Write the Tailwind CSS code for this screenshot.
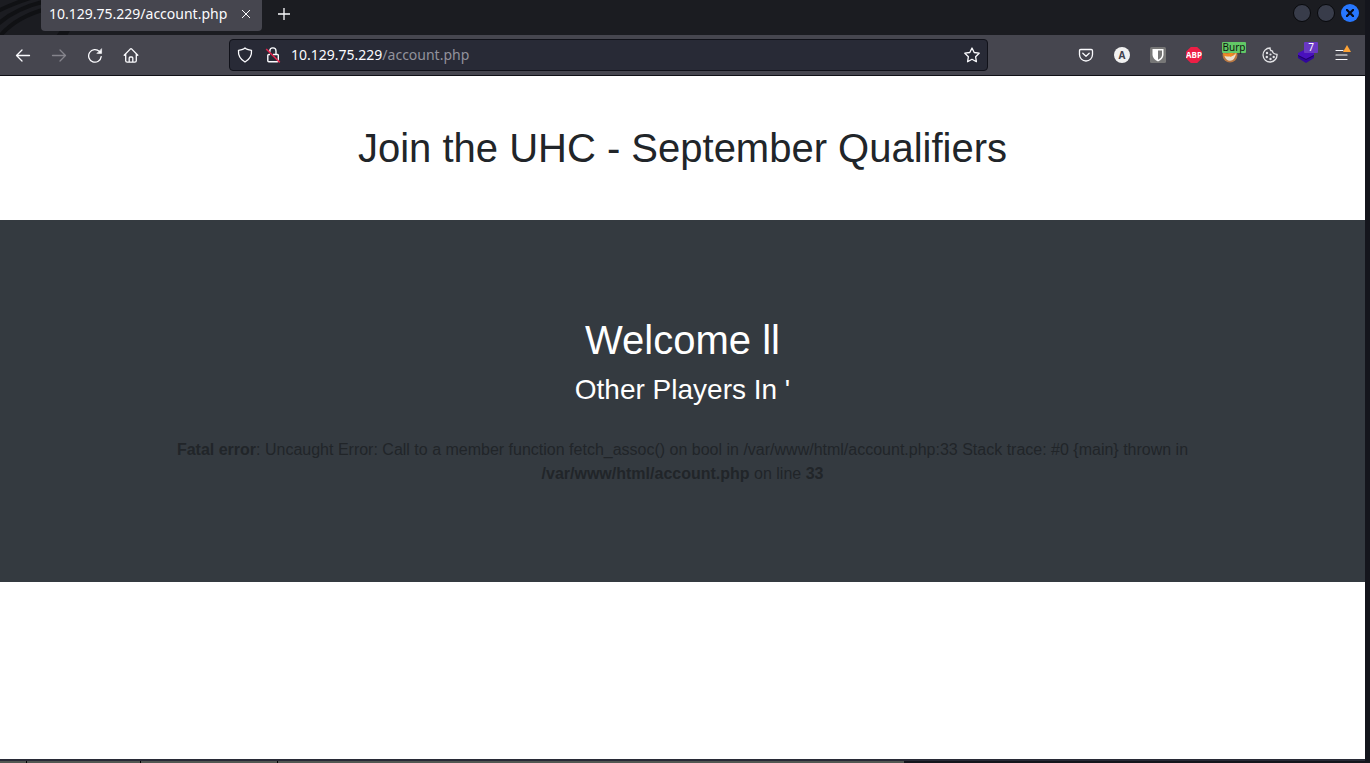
<!DOCTYPE html>
<html lang="en">
<head>
<meta charset="utf-8">
<title>10.129.75.229/account.php</title>
<script src="https://cdn.jsdelivr.net/npm/@tailwindcss/browser@4"></script>
</head>
<body class="h-screen overflow-hidden bg-[#14151c] pr-[5px] font-['Noto_Sans',sans-serif]">
<div class="flex h-full flex-col">
  <header class="relative flex h-[35px] shrink-0 items-start bg-[#1b1c21] pl-[41px] text-[#fbfbfe]">
    <svg class="absolute left-0 top-0" width="72" height="35" viewBox="0 0 72 35" fill="none" stroke="#101114" stroke-width="4" aria-hidden="true"><path d="M-2 11Q16 2 40-5M-2 24Q16 8 46 1M0 36Q16 17 46 9"/><path d="M56 36L61 29H71L67 36Z" fill="#111216" stroke="none"/></svg>
    <div class="relative flex h-[31px] w-[221px] items-center justify-between rounded-b bg-[#46464f] pl-2 pr-2 pb-[3px]">
      <span class="text-sm whitespace-nowrap">10.129.75.229/account.php</span>
      <button aria-label="Close tab" class="grid size-4 place-items-center"><svg width="10" height="10" viewBox="0 0 10 10" stroke="currentColor" stroke-width="1"><path d="M1 1L9 9M9 1L1 9"/></svg></button>
    </div>
    <button aria-label="New tab" class="ml-[14px] grid h-[28px] w-4 place-items-center"><svg width="14" height="14" viewBox="0 0 14 14" stroke="currentColor" stroke-width="1.3"><path d="M7 1V13M1 7H13"/></svg></button>
    <div class="ml-auto flex h-[26px] items-center gap-[6px] pr-[6px]">
      <button aria-label="Minimize" class="size-[18px] rounded-full border border-[#08090c] bg-[#383c4a]"></button>
      <button aria-label="Maximize" class="size-[18px] rounded-full border border-[#08090c] bg-[#383c4a]"></button>
      <button aria-label="Close window" class="grid size-[18px] place-items-center rounded-full bg-[#2777ff]"><svg width="8" height="8" viewBox="0 0 8 8" stroke="#080b18" stroke-width="2.2"><path d="M0 0L8 8M8 0L0 8"/></svg></button>
    </div>
  </header>

  <nav aria-label="Browser toolbar" class="flex h-[41px] shrink-0 items-center border-b border-[#0f1016] bg-[#46464f] pl-[15px] pr-[15px] text-[#fbfbfe]">
    <div class="flex w-[214px] shrink-0 items-center gap-5">
      <button aria-label="Back"><svg width="16" height="16" viewBox="0 0 16 16" fill="none" stroke="currentColor" stroke-width="1.3" stroke-linecap="round" stroke-linejoin="round"><path d="M14.5 8.5H1.5M7 3L1.5 8.5L7 14"/></svg></button>
      <button aria-label="Forward" disabled class="text-[#85848c]"><svg width="16" height="16" viewBox="0 0 16 16" fill="none" stroke="currentColor" stroke-width="1.3" stroke-linecap="round" stroke-linejoin="round"><path d="M1.5 8.5H14.5M9 3L14.5 8.5L9 14"/></svg></button>
      <button aria-label="Reload"><svg width="16" height="16" viewBox="0 0 16 16" fill="none" stroke="currentColor" stroke-width="1.3" stroke-linecap="round"><path d="M12.4 4.4A6.3 6.3 0 1 0 14.2 9.6"/><path d="M14.6 2V6.4H10.2Z" fill="currentColor" stroke-width=".6" stroke-linejoin="round"/></svg></button>
      <button aria-label="Home"><svg width="16" height="16" viewBox="0 0 16 16" fill="none" stroke="currentColor" stroke-width="1.3" stroke-linecap="round" stroke-linejoin="round"><path d="M1.2 8.3L7.2 2.1Q8 1.4 8.8 2.1L14.8 8.3M2.7 7.1V13.8Q2.7 15.2 4.2 15.2H11.8Q13.3 15.2 13.3 13.8V7.1M6.2 15V11Q6.2 10 7.2 10H8.8Q9.8 10 9.8 11V15"/></svg></button>
    </div>
    <div class="flex h-8 flex-1 items-center rounded border border-[#101119] bg-[#282a36] px-[7px]">
      <button aria-label="Tracking protection"><svg width="16" height="16" viewBox="0 0 16 16" fill="none" stroke="currentColor" stroke-width="1.3" stroke-linejoin="round"><path d="M8 1Q9.5 2.6 14.5 3.3Q15.2 11 8 15Q.8 11 1.5 3.3Q6.5 2.6 8 1Z"/></svg></button>
      <button aria-label="Connection not secure" class="ml-3"><svg width="16" height="16" viewBox="0 0 16 16" fill="none" stroke="currentColor" stroke-width="1.4"><path d="M4.8 5V4A3.1 3.1 0 0 1 11 4V7.5M8 7.5H12.5Q13.3 7.5 13.3 8.3V13.5Q13.3 14.7 12.3 14.7H3.8Q2.8 14.7 2.8 13.7V8.5Q2.8 7.5 3.8 7.5H5"/><path d="M1.2 2L14.8 15.4" stroke="#e22850" stroke-width="1.5"/></svg></button>
      <div class="relative ml-[10px] h-6 flex-1 text-sm leading-6">
        <input aria-label="Address" type="text" value="10.129.75.229/account.php" class="absolute inset-0 w-full bg-transparent text-transparent outline-none">
        <div aria-hidden="true" class="pointer-events-none relative whitespace-nowrap">10.129.75.229<span class="text-[#92929c]">/account.php</span></div>
      </div>
      <button aria-label="Bookmark this page"><svg width="16" height="16" viewBox="0 0 16 16" fill="none" stroke="currentColor" stroke-width="1.3" stroke-linejoin="round"><path d="M8 1L10.2 5.5L15.2 6.2L11.6 9.7L12.4 14.7L8 12.3L3.6 14.7L4.4 9.7L.8 6.2L5.8 5.5Z"/></svg></button>
    </div>
    <div class="ml-[90px] flex shrink-0 items-center gap-5">
      <button aria-label="Save to Pocket"><svg width="16" height="16" viewBox="0 0 16 16" fill="none" stroke="currentColor" stroke-width="1.3" stroke-linecap="round" stroke-linejoin="round"><path d="M2.8 2.5H13.2Q14.5 2.5 14.5 3.8V7.5A6.5 6.5 0 0 1 1.5 7.5V3.8Q1.5 2.5 2.8 2.5Z"/><path d="M4.8 6.3L8 9.3L11.2 6.3"/></svg></button>
      <button aria-label="Account" class="grid size-4 place-items-center rounded-full bg-[#f1f1f1] text-[10px] leading-none font-bold text-[#42414d]">A</button>
      <button aria-label="Password manager"><svg width="16" height="16" viewBox="0 0 16 16"><rect width="16" height="16" rx="1.5" fill="#777"/><path d="M2.5 2H13.5V8Q13 12 8 14.5Q3 12 2.5 8Z" fill="#fff"/><path d="M8 3.5H12V8Q11.6 11 8 12.8Z" fill="#777"/></svg></button>
      <button aria-label="Adblock Plus"><svg width="16" height="16" viewBox="0 0 16 16"><path d="M4.8 0H11.2L16 4.8V11.2L11.2 16H4.8L0 11.2V4.8Z" fill="#ed1e45"/><text x="8" y="11" fill="#fff" text-anchor="middle" font-family="Open Sans" font-size="8" font-weight="700">ABP</text></svg></button>
      <button aria-label="FoxyProxy, Burp" class="relative w-5"><svg width="16" height="16" viewBox="0 0 16 16"><circle cx="8" cy="8" r="7.5" fill="#b77743"/><path d="M1 6Q2 12 8 13Q14 12 15 5L10 8Z" fill="#ef8a25"/><path d="M2.5 9Q4 13.5 8 13.8Q13 13.5 14 6Q11 11 2.5 9Z" fill="#e8ded0"/><path d="M5 7L12 5L9 10Z" fill="#f08a22"/></svg><span class="absolute -top-[5px] left-0 h-[11px] w-6 rounded-[1px] bg-[#62c866] text-center text-[10px] leading-[11px] text-[#101510]">Burp</span></button>
      <button aria-label="Cookie editor"><svg width="16" height="16" viewBox="0 0 16 16" fill="none" stroke="#e3e3e6" stroke-width="1.3"><path d="M8 1Q8 4 10.5 4.2Q10.8 7 15 7.3A7 7 0 1 1 8 1Z"/><g fill="#e3e3e6" stroke="none"><circle cx="5" cy="6" r="1.2"/><circle cx="8.5" cy="7.5" r="1.1"/><circle cx="4.8" cy="10" r="1.2"/><circle cx="8.5" cy="12" r="1.2"/><circle cx="11.7" cy="10" r="1.2"/></g></svg></button>
      <button aria-label="Wappalyzer, 7" class="relative"><svg width="16" height="16" viewBox="0 0 16 16"><path d="M0 9L8 5L16 9V11L8 16L0 11Z" fill="#31069c"/><path d="M0 6L8 2L16 6V8L8 12L0 8Z" fill="#4910bd"/><path d="M0 8L8 12L16 8V9L8 13L0 9Z" fill="#210069"/></svg><span class="absolute -top-[5px] left-[6px] h-[11px] w-[14px] rounded-[1px] bg-[#6938c4] text-center text-[10px] leading-[11px] text-white">7</span></button>
      <button aria-label="Application menu" class="relative"><svg width="16" height="16" viewBox="0 0 16 16" stroke="currentColor" stroke-width="1.2" stroke-linecap="round"><path d="M2 3.5H9M2 8H13M2 12.5H13"/></svg><svg class="absolute -top-[2px] left-[9px]" width="8" height="7" viewBox="0 0 8 7"><path d="M4 0L8 7H0Z" fill="#ffa436"/></svg></button>
    </div>
  </nav>

  <main class="flex-1 bg-white text-center font-['Liberation_Sans',sans-serif] text-[#212529]">
    <h1 class="py-12 text-[40px] leading-12">Join the UHC - September Qualifiers</h1>
    <section class="bg-[#343a40] py-24">
      <div class="mx-auto max-w-[1110px] px-4">
        <h2 class="mb-2 text-[40px] leading-12 text-white">Welcome ll</h2>
        <h3 class="mb-6 text-[28px] leading-9 text-white">Other Players In '</h3>
        <p class="pt-[6px] text-base leading-6"><b>Fatal error</b>: Uncaught Error: Call to a member function fetch_assoc() on bool in /var/www/html/account.php:33 Stack trace: #0 {main} thrown in <b>/var/www/html/account.php</b> on line <b>33</b></p>
      </div>
    </section>
  </main>
  <footer class="h-1 shrink-0 border-t-2 border-[#282a36] bg-[#14151c]"><div class="flex h-[2px] w-[904px] bg-[#525752]"><i class="ml-[26px] w-px bg-black"></i><i class="ml-[113px] w-px bg-black"></i><i class="ml-[136px] w-px bg-black"></i></div></footer>
</div>
</body>
</html>
